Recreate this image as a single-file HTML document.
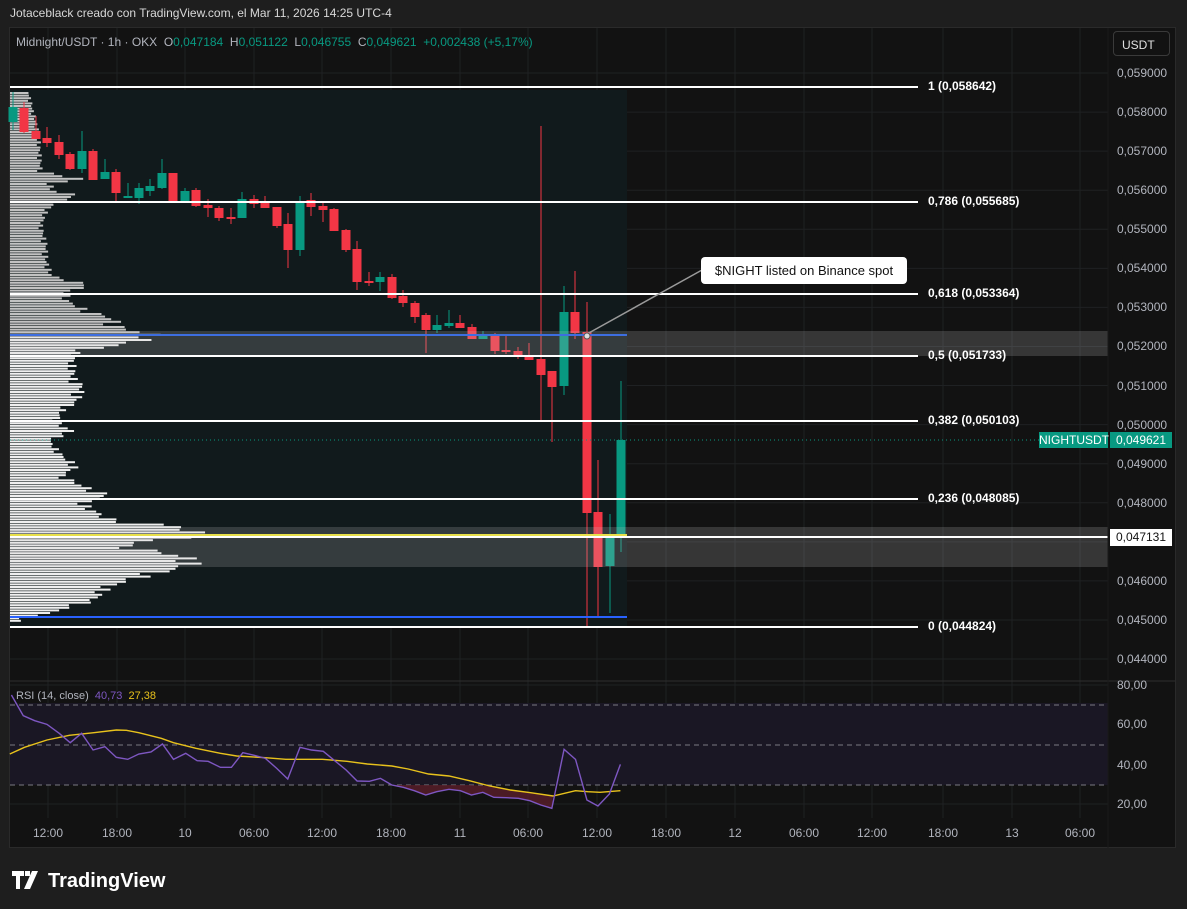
<!DOCTYPE html>
<html><head><meta charset="utf-8"><style>
html,body{margin:0;padding:0;background:#1e1e1e;width:1187px;height:909px;overflow:hidden;font-family:"Liberation Sans",sans-serif}
.t{position:absolute;white-space:nowrap}
</style></head><body>
<div class="t" style="left:10px;top:6px;font-size:12px;color:#d8d8d8">Jotaceblack creado con TradingView.com, el Mar 11, 2026 14:25 UTC-4</div>
<div style="position:absolute;left:9px;top:27px;width:1167px;height:821px;background:#121212;border:1px solid #2a2a2a;box-sizing:border-box"></div>
<svg id="s" width="1187" height="909" style="position:absolute;left:0;top:0" xmlns="http://www.w3.org/2000/svg">
<g id="grid" stroke="#1f2123" stroke-width="1"></g>
<rect x="10" y="90" width="617" height="538" fill="#111a1c"/>
<g id="prof"></g>
<g id="cand"></g>
<rect x="10" y="331" width="1098" height="25" fill="rgba(200,200,200,0.2)"/>
<rect x="10" y="527" width="1098" height="40" fill="rgba(200,200,200,0.2)"/>
<g stroke="#ffffff" stroke-width="2">
<line x1="10" y1="87" x2="918" y2="87"/><line x1="10" y1="202" x2="918" y2="202"/>
<line x1="10" y1="294" x2="918" y2="294"/><line x1="10" y1="356" x2="918" y2="356"/>
<line x1="10" y1="421" x2="918" y2="421"/><line x1="10" y1="499" x2="918" y2="499"/>
<line x1="10" y1="627" x2="918" y2="627"/><line x1="10" y1="537" x2="1108" y2="537"/>
</g>
<line x1="10" y1="335" x2="627" y2="335" stroke="#3d6ee0" stroke-width="2"/>
<line x1="10" y1="617" x2="627" y2="617" stroke="#2962ff" stroke-width="2"/>
<line x1="10" y1="535" x2="627" y2="535" stroke="#e8e04a" stroke-width="2"/>
<line x1="10" y1="440" x2="1040" y2="440" stroke="#089981" stroke-width="1" stroke-dasharray="1 3"/>
<line x1="587" y1="334" x2="702" y2="270" stroke="#9a9a9a" stroke-width="1.5"/>
<circle cx="587" cy="336" r="3" fill="#ddd" stroke="#555"/>
<rect x="10" y="703" width="1098" height="82" fill="#1a1724"/>
<g stroke="#7a7a82" stroke-dasharray="5 4"><line x1="10" y1="705" x2="1108" y2="705"/><line x1="10" y1="745" x2="1108" y2="745"/><line x1="10" y1="785" x2="1108" y2="785"/></g>
<line x1="10" y1="681" x2="1175" y2="681" stroke="#2e2e2e"/>
<g transform="translate(0,670) scale(0.40816,0.33333)">
<polygon fill="#5a1e2a" opacity="0.8" points="960,345 988,352 1015,362 1043,375 1070,365 1100,358 1128,362 1155,375 1183,367 1210,382 1240,383 1270,385 1298,392 1325,405 1352,415 1355,378 1300,368 1250,360 1200,348 1150,345 1000,345"/>
<polyline fill="none" stroke="#e8c21c" stroke-width="1.4" vector-effect="non-scaling-stroke" points="24,252 60,232 115,210 170,196 230,188 285,180 310,181 340,188 395,205 425,218 480,235 540,250 580,258 650,263 700,268 790,268 850,274 900,282 960,288 1000,297 1050,312 1100,318 1150,332 1200,348 1250,360 1300,368 1355,378 1410,362 1440,365 1470,367 1520,362"/>
<polyline fill="none" stroke="#7e57c2" stroke-width="1.4" vector-effect="non-scaling-stroke" points="28,75 57,137 85,152 115,163 145,190 172,218 200,190 228,240 257,230 285,262 313,268 340,252 370,246 398,222 425,268 455,250 483,272 510,274 540,292 567,292 595,248 623,256 650,265 678,295 705,327 735,232 763,240 792,244 820,272 848,300 875,333 905,334 932,325 960,345 988,352 1015,362 1043,375 1070,365 1100,358 1128,362 1155,375 1183,367 1210,382 1240,383 1270,385 1298,392 1325,405 1352,415 1382,238 1410,268 1438,390 1465,408 1493,372 1520,283"/>
</g>
<line x1="1108" y1="28" x2="1108" y2="848" stroke="#1a1a1a"/>
</svg>
<div class="t" style="left:16px;top:35px;font-size:12px;color:#b2b5be">Midnight/USDT · 1h · OKX &nbsp;O<span style="color:#089981">0,047184</span> &nbsp;H<span style="color:#089981">0,051122</span> &nbsp;L<span style="color:#089981">0,046755</span> &nbsp;C<span style="color:#089981">0,049621</span> &nbsp;<span style="color:#089981">+0,002438 (+5,17%)</span></div>
<div class="t" style="left:1113px;top:31px;width:57px;height:25px;border:1px solid #3a3a3a;border-radius:4px;box-sizing:border-box;font-size:12px;color:#e0e0e0;padding:6px 0 0 8px">USDT</div>
<div id="lbl"></div>
<div class="t" style="left:701px;top:257px;width:206px;height:27px;background:#fff;border-radius:4px;font-size:13px;color:#111;line-height:27px;text-align:center">$NIGHT listed on Binance spot</div>
<div class="t" style="left:1039px;top:432px;width:69px;height:16px;background:#089981;color:#fff;font-size:12px;line-height:16px;text-align:center">NIGHTUSDT</div>
<div class="t" style="left:1110px;top:432px;width:62px;height:16px;background:#089981;color:#fff;font-size:12px;line-height:16px;text-align:center">0,049621</div>
<div class="t" style="left:1110px;top:529px;width:62px;height:17px;background:#fff;color:#111;font-size:12px;line-height:17px;text-align:center">0,047131</div>
<div class="t" style="left:16px;top:690px;font-size:11px;color:#b2b5be">RSI (14, close) &nbsp;<span style="color:#7e57c2">40,73</span> &nbsp;<span style="color:#e8c21c">27,38</span></div>
<svg width="160" height="24" style="position:absolute;left:12px;top:868px">
<path d="M0 3h12v5H8v13H4V8H0z M13 3h5v5h-5z M20 3h6l-8 18h-6z" fill="#fff"/>
<text x="36" y="19" font-family="Liberation Sans, sans-serif" font-weight="bold" font-size="20" fill="#fff">TradingView</text>
</svg>
<script>
var NS="http://www.w3.org/2000/svg";
function el(p,t,a){var e=document.createElementNS(NS,t);for(var k in a)e.setAttribute(k,a[k]);p.appendChild(e);return e;}
var grid=document.getElementById('grid');
var tx=[48,117,185,254,322,391,460,528,597,666,735,804,872,943,1012,1080];
tx.forEach(function(x){el(grid,'line',{x1:x,y1:28,x2:x,y2:818});});
var lbl=document.getElementById('lbl'),h='';
for(var i=0;i<16;i++){var y=73+i*39.07;el(grid,'line',{x1:10,y1:y,x2:1108,y2:y});
 if(i!=12)h+='<div class="t" style="left:1117px;top:'+(y-7)+'px;font-size:12px;color:#b2b5be">0,0'+(59-i)+'000</div>';}
[685,724,765,804].forEach(function(y,j){el(grid,'line',{x1:10,y1:y,x2:1108,y2:y});h+='<div class="t" style="left:1117px;top:'+(y-7)+'px;font-size:12px;color:#b2b5be">'+['80,00','60,00','40,00','20,00'][j]+'</div>';});
var tl=['12:00','18:00','10','06:00','12:00','18:00','11','06:00','12:00','18:00','12','06:00','12:00','18:00','13','06:00'];
tx.forEach(function(x,j){h+='<div class="t" style="left:'+(x-25)+'px;width:50px;text-align:center;top:826px;font-size:12px;color:#b2b5be">'+tl[j]+'</div>';});
var fib=[[87,'1 (0,058642)'],[202,'0,786 (0,055685)'],[294,'0,618 (0,053364)'],[356,'0,5 (0,051733)'],[421,'0,382 (0,050103)'],[499,'0,236 (0,048085)'],[627,'0 (0,044824)']];
fib.forEach(function(f){h+='<div class="t" style="left:928px;top:'+(f[0]-8)+'px;font-size:12px;color:#fff;font-weight:bold">'+f[1]+'</div>';});
lbl.innerHTML=h;
var prof=document.getElementById('prof');
var pw=[[92,18],[100,20],[110,22],[120,25],[140,28],[170,30],[175,50],[178,73],[182,40],[190,40],[195,70],[200,45],[210,35],[225,30],[245,35],[260,35],[275,40],[285,79],[290,55],[300,55],[310,75],[318,100],[326,105],[330,120],[335,145],[340,125],[345,100],[350,65],[360,60],[380,62],[385,70],[400,65],[410,50],[420,45],[425,50],[430,60],[440,38],[455,50],[465,65],[475,50],[485,70],[495,95],[502,70],[510,80],[520,100],[525,160],[530,175],[535,185],[540,130],[545,110],[555,165],[560,180],[565,170],[575,130],[585,95],[595,85],[600,80],[605,60],[612,40],[617,12]];
function wAt(y){for(var i=1;i<pw.length;i++){if(y<=pw[i][0]){var a=pw[i-1],b=pw[i];return a[1]+(b[1]-a[1])*(y-a[0])/(b[0]-a[0]);}}return 10;}
for(var y=92;y<620;y+=2.6){var w=wAt(y)*(0.9+0.2*Math.abs(Math.sin(y*1.7)));el(prof,'rect',{x:10,y:y,width:w,height:2,fill:y<336?'#c2c2c2':'#efefef'});}
var C=[[13,'g',107,122,92,130],[24,'r',108,132,102,133],[36,'r',131,139,116,139],[47,'r',138,143,127,147],[59,'r',142,155,135,159],[70,'r',154,169,152,170],[82,'g',151,169,131,173],[93,'r',151,180,149,180],[105,'g',172,179,159,179],[116,'r',172,193,169,201],[128,'g',196,197,183,198],[139,'g',188,198,183,204],[150,'g',186,191,179,196],[162,'g',173,188,159,189],[173,'r',173,201,173,201],[185,'g',191,202,188,202],[196,'r',190,206,188,207],[208,'r',205,208,199,217],[219,'r',208,218,206,221],[231,'r',217,219,208,224],[242,'g',199,218,192,218],[254,'r',199,204,195,208],[265,'r',202,208,196,208],[277,'r',207,226,207,228],[288,'r',224,250,213,268],[300,'g',201,250,196,256],[311,'r',200,207,193,216],[323,'r',206,210,203,222],[334,'r',209,231,208,231],[346,'r',230,250,229,252],[357,'r',249,282,241,290],[369,'r',281,282,272,286],[380,'g',277,282,272,291],[392,'r',277,298,274,299],[403,'r',296,303,290,307],[415,'r',303,317,301,323],[426,'r',315,330,313,353],[437,'g',325,330,315,333],[449,'g',323,326,310,328],[460,'r',323,328,315,328],[472,'r',327,339,324,339],[483,'g',336,339,331,339],[495,'r',335,351,333,354],[506,'r',350,351,336,354],[518,'r',351,355,347,359],[529,'r',355,360,343,360],[541,'r',359,375,126,421],[552,'r',371,387,371,442],[564,'g',312,386,286,395],[575,'r',312,333,271,339],[587,'r',332,513,302,628],[598,'r',512,567,460,616],[610,'g',536,566,514,613],[621,'g',440,536,381,552]];
var cg=document.getElementById('cand');
C.forEach(function(c){var col=c[1]=='r'?'#f23645':'#089981';
el(cg,'line',{x1:c[0],y1:c[4],x2:c[0],y2:c[5],stroke:col,'stroke-width':1});
el(cg,'rect',{x:c[0]-4.5,y:c[2],width:9,height:Math.max(2,c[3]-c[2]),fill:col});});
</script>
</body></html>
